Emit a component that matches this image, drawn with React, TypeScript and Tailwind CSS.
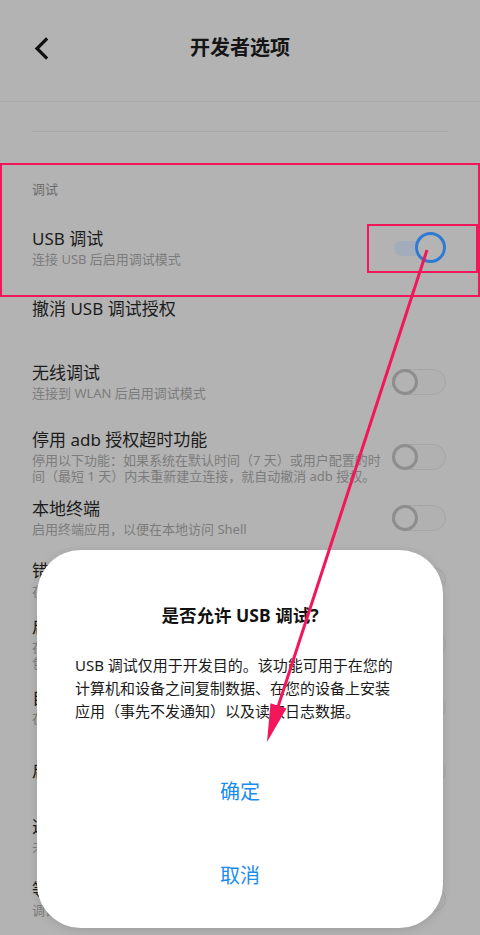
import React from 'react';

type Item = {
  title: string;
  sub?: string[];
  toggle?: 'on' | 'off';
  mt: number;
};

// spacing between rows taken from the screenshot
const items: Item[] = [
  { title: 'USB 调试', sub: ['连接 USB 后启用调试模式'], toggle: 'on', mt: 32 },
  { title: '撤消 USB 调试授权', mt: 32 },
  { title: '无线调试', sub: ['连接到 WLAN 后启用调试模式'], toggle: 'off', mt: 44 },
  {
    title: '停用 adb 授权超时功能',
    sub: ['停用以下功能：如果系统在默认时间（7 天）或用户配置的时', '间（最短 1 天）内未重新建立连接，就自动撤消 adb 授权。'],
    toggle: 'off',
    mt: 29,
  },
  { title: '本地终端', sub: ['启用终端应用，以便在本地访问 Shell'], toggle: 'off', mt: 15 },
  { title: '错误报告快捷方式', sub: ['在电源菜单中显示用于提交错误报告的按钮'], toggle: 'off', mt: 24 },
  {
    title: '启用详细供应商日志记录',
    sub: ['在错误报告中包含其他设备特定的供应商日志，这些日志可能', '包含私密信息、消耗更多电量和/或使用更多存储空间。'],
    toggle: 'off',
    mt: 18,
  },
  { title: '自动系统更新', sub: ['在设备重新启动时应用更新'], toggle: 'off', mt: 17 },
  { title: '启用视图属性检查功能', toggle: 'off', mt: 32 },
  { title: '选择调试应用', sub: ['未设置任何要调试的应用'], mt: 33 },
  { title: '等待调试器', sub: ['调试应用会在执行前等待附加调试器'], toggle: 'off', mt: 25 },
  { title: '通过 USB 验证应用', mt: 20 },
];

const Toggle = ({ on }: { on: boolean }) =>
  on ? (
    <div className="relative w-[54px] h-[32px] shrink-0">
      <div className="absolute left-[2px] top-[9px] w-[44px] h-[15px] rounded-full bg-[#a2acba]" />
      <div className="absolute right-0 top-0 w-[31px] h-[31px] rounded-full border-[3.5px] border-[#2f7bd2] bg-[#b4b4b4]" />
    </div>
  ) : (
    <div className="relative w-[54px] h-[26px] shrink-0 rounded-full border-[1.5px] border-[#a6a6a6] bg-[#b1b1b1]">
      <div className="absolute left-[-1px] top-[-1.5px] w-[26px] h-[26px] rounded-full border-[3px] border-[#8e8e8e] bg-[#b3b3b3]" />
    </div>
  );

export default function App() {
  return (
    <div
      className="relative w-[480px] h-[935px] overflow-hidden bg-[#b3b3b3]"
      style={{ fontFamily: '"Noto Sans", "Noto Sans CJK SC", sans-serif' }}
    >
      {/* Header */}
      <div className="h-[102px] border-b border-[#aaaaaa] flex items-start">
        <div className="relative w-full h-[96px] flex items-center justify-center">
          <svg className="absolute left-[33px] top-[37px]" width="18" height="24" viewBox="0 0 18 24" fill="none">
            <path d="M13 2.5 L4 11.5 L13 20.5" stroke="#111" strokeWidth="3.2" strokeLinecap="square" />
          </svg>
          <span className="text-[20px] leading-[28px] font-bold text-[#151515]">开发者选项</span>
        </div>
      </div>

      <div className="mt-[29px] mx-8 h-px bg-[#a9a9a9]" />

      {/* List */}
      <div className="px-8">
        <div className="mt-[49px] text-[13px] leading-[16px] text-[#6d6d6d]">调试</div>
        {items.map((it) => (
          <div key={it.title} className="flex items-center justify-between" style={{ marginTop: it.mt }}>
            <div className="min-w-0">
              <div className="text-[17px] leading-[20px] text-[#1c1c1c] whitespace-nowrap">{it.title}</div>
              {it.sub && (
                <div className="mt-[2px] text-[13px] leading-[16px] text-[#7c7c7c]">
                  {it.sub.map((s) => (
                    <div key={s} className="whitespace-nowrap">{s}</div>
                  ))}
                </div>
              )}
            </div>
            {it.toggle && (
              <div className="mr-[2px]">
                <Toggle on={it.toggle === 'on'} />
              </div>
            )}
          </div>
        ))}
      </div>

      {/* Dialog */}
      <div className="absolute left-[37px] top-[550px] w-[406px] h-[378px] rounded-[44px] bg-white shadow-[0_2px_10px_rgba(0,0,0,0.12)]">
        <div className="pt-[53px] text-center text-[17.5px] leading-[24px] font-bold text-[#111]">
          是否允许 USB 调试?
        </div>
        <div className="mt-[27px] pl-[38px] text-[15px] leading-[23px] text-[#1a1a1a]">
          <div className="whitespace-nowrap">USB 调试仅用于开发目的。该功能可用于在您的</div>
          <div className="whitespace-nowrap">计算机和设备之间复制数据、在您的设备上安装</div>
          <div className="whitespace-nowrap">应用（事先不发通知）以及读取日志数据。</div>
        </div>
        <div className="mt-[27px] flex flex-col">
          <div className="h-[84px] flex items-center justify-center text-[20px] text-[#1a8cf0]">确定</div>
          <div className="h-[84px] flex items-center justify-center text-[20px] text-[#1a8cf0]">取消</div>
        </div>
      </div>

      {/* Annotation overlay */}
      <svg className="absolute inset-0 pointer-events-none" width="480" height="935" viewBox="0 0 480 935">
        <rect x="1" y="164" width="478" height="132" fill="none" stroke="#f3165a" strokeWidth="2" />
        <rect x="368" y="225" width="109" height="47" fill="none" stroke="#f3165a" strokeWidth="2" />
        <line x1="427" y1="250" x2="275" y2="716" stroke="#f3165a" strokeWidth="3" />
        <polygon points="267,742 286.5,708.5 270.5,703.3" fill="#f3165a" />
      </svg>
    </div>
  );
}
